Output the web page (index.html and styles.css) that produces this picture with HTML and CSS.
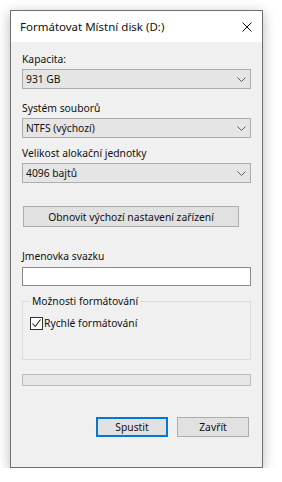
FILE: index.html
```html
<!DOCTYPE html>
<html lang="cs">
<head>
    <meta charset="UTF-8">
    <title>Formátovat Místní disk (D:)</title>
    <link rel="stylesheet" href="styles.css">
</head>
<body>

    <div class="window">
        <div class="titlebar">
            <span class="title">Formátovat Místní disk (D:)</span>
            <svg class="close" width="10" height="10" viewBox="0 0 10 10">
                <path d="M0.5 0.5 L9.5 9.5 M9.5 0.5 L0.5 9.5" stroke="#111" stroke-width="1" fill="none"/>
            </svg>
        </div>

        <div class="content">
            <div class="label">Kapacita:</div>
            <div class="combo">
                <span>931 GB</span>
                <svg class="chevron" width="9" height="5" viewBox="0 0 9 5"><path d="M0.5 0.5 L4.5 4.5 L8.5 0.5" stroke="#606060" fill="none"/></svg>
            </div>

            <div class="label gap">Systém souborů</div>
            <div class="combo">
                <span>NTFS (výchozí)</span>
                <svg class="chevron" width="9" height="5" viewBox="0 0 9 5"><path d="M0.5 0.5 L4.5 4.5 L8.5 0.5" stroke="#606060" fill="none"/></svg>
            </div>

            <div class="label gap-small">Velikost alokační jednotky</div>
            <div class="combo">
                <span>4096 bajtů</span>
                <svg class="chevron" width="9" height="5" viewBox="0 0 9 5"><path d="M0.5 0.5 L4.5 4.5 L8.5 0.5" stroke="#606060" fill="none"/></svg>
            </div>

            <button class="btn reset">Obnovit výchozí nastavení zařízení</button>

            <div class="label name-label">Jmenovka svazku</div>
            <div class="textbox"></div>

            <fieldset class="group">
                <legend>Možnosti formátování</legend>
                <div class="check">
                    <span class="box">
                        <svg width="11" height="11" viewBox="0 0 11 11"><path d="M1.5 5.5 L4.2 8.5 L9.5 1.5" stroke="#222" stroke-width="1.1" fill="none"/></svg>
                    </span>
                    Rychlé formátování
                </div>
            </fieldset>

            <div class="progress"></div>

            <div class="actions">
                <button class="btn primary">Spustit</button>
                <button class="btn">Zavřít</button>
            </div>
        </div>
    </div>

</body>
</html>
```

FILE: styles.css
```css
body { margin: 0; padding: 10px 0 0 10px; background: #fff; font-family: "Noto Sans", "Open Sans", sans-serif; font-size: 10.3px; color: #111; }
.window { width: 251px; height: 456px; border: 1px solid #6f6f6f; background: #f0f0f0; box-shadow: 0 3px 12px rgba(0,0,0,0.28); display: flex; flex-direction: column; }
.titlebar { height: 31px; background: #fff; display: flex; align-items: center; justify-content: space-between; padding: 0 10px 0 9px; }
.title { font-size: 11.5px; }
.close { display: block; }
.content { padding: 9px 11px 0 11px; display: flex; flex-direction: column; }
.label { line-height: 16px; height: 16px; margin-bottom: 2px; }
.label.gap { margin-top: 11px; }
.label.gap-small { margin-top: 7px; }
.combo { height: 18px; border: 1px solid #adadad; background: #e5e5e5; display: flex; align-items: center; justify-content: space-between; padding: 0 4px 0 3px; }
.chevron { display: block; }
.btn { font-family: inherit; font-size: 10.3px; color: #111; background: #e1e1e1; border: 1px solid #adadad; height: 20px; padding: 0; cursor: pointer; }
.reset { margin: 23px 0 0 1px; width: 216px; height: 21px; }
.name-label { margin-top: 21px; margin-bottom: 3px; }
.textbox { height: 17px; border: 1px solid #8a8a8a; background: #fff; }
.group { margin: 7px 0 0 0; padding: 0 7px 0 7px; border: 1px solid #dcdcdc; height: 67px; box-sizing: border-box; min-width: 0; }
.group legend { padding: 0 2px; margin-left: 0; line-height: 16px; }
.check { display: flex; align-items: center; gap: 1px; margin-top: 6px; line-height: 16px; }
.box { width: 11px; height: 11px; border: 1px solid #333; background: #fff; display: flex; }
.box svg { display: block; }
.progress { margin-top: 14px; height: 10px; border: 1px solid #bcbcbc; background: #e6e6e6; }
.actions { display: flex; justify-content: flex-end; gap: 9px; margin-top: 31px; padding-right: 2px; }
.actions .btn { width: 72px; }
.primary { border: 2px solid #0078d7; }
```
